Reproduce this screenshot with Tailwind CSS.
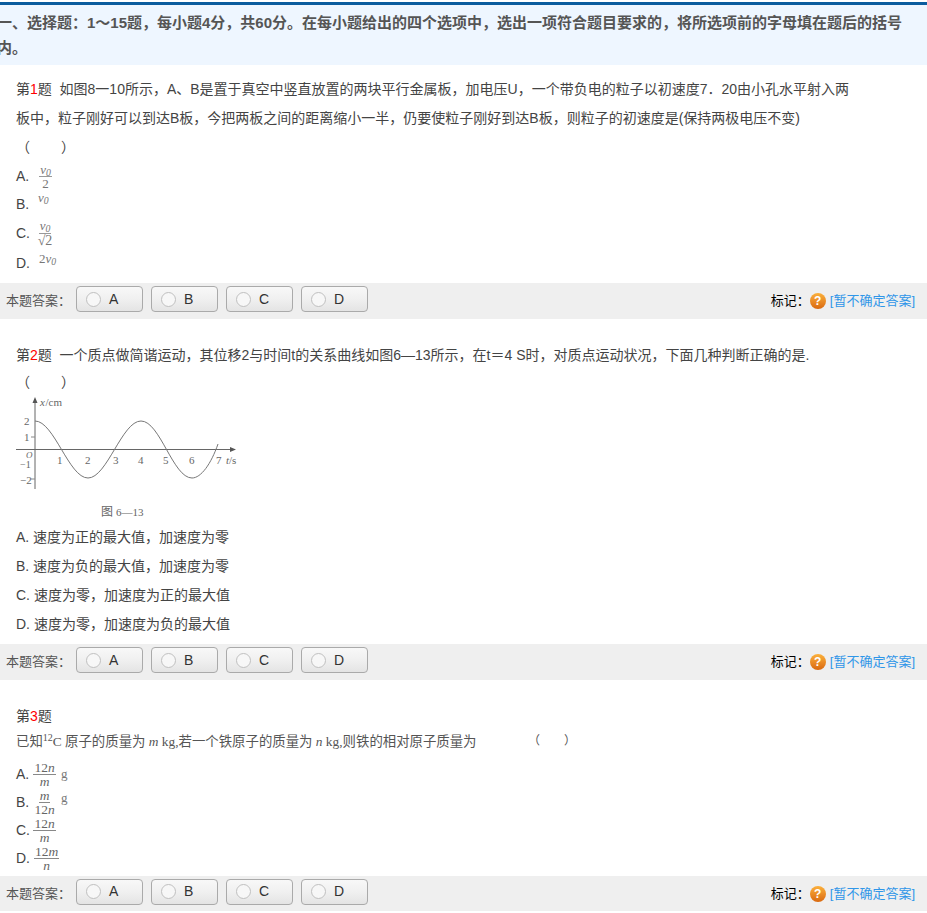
<!DOCTYPE html>
<html lang="zh">
<head>
<meta charset="utf-8">
<script src="https://cdn.jsdelivr.net/npm/@tailwindcss/browser@4"></script>
</head>
<body class="bg-white text-[14px] text-[#444] font-['Liberation_Sans','Noto_Sans_CJK_SC',sans-serif] overflow-x-hidden [text-spacing-trim:space-all]">
<main class="w-[927px] pt-[2px]">
  <header class="border-t-[3px] border-[#0a5c9e] bg-[#eef6ff] h-[63px] pt-[5px] overflow-hidden">
    <p class="-ml-[3px] w-[930px] whitespace-nowrap font-bold text-[15px] leading-[25px] text-[#555]">一、选择题：1～15题，每小题4分，共60分。在每小题给出的四个选项中，选出一项符合题目要求的，将所选项前的字母填在题后的括号<br>内。</p>
  </header>

  <section class="pt-[10px]">
    <div class="pl-[16px]">
      <p class="leading-[29px] whitespace-nowrap">第<span class="text-[#f00]">1</span>题&nbsp; 如图8一10所示，A、B是置于真空中竖直放置的两块平行金属板，加电压U，一个带负电的粒子以初速度7．20由小孔水平射入两<br>板中，粒子刚好可以到达B板，今把两板之间的距离缩小一半，仍要使粒子刚好到达B板，则粒子的初速度是(保持两极电压不变)</p>
      <p class="h-[29px] leading-[29px]">（&nbsp;&nbsp;&nbsp;&nbsp;&nbsp;&nbsp;&nbsp;&nbsp;）</p>
      <div class="flex items-center h-[29px]"><span class="w-[23px]">A.</span><span class="inline-flex flex-col items-center w-[13px] font-['Liberation_Serif',serif] text-[13px] leading-[13px] text-[#777]"><span class="italic border-b border-[#999] px-[1px]">v<sub>0</sub></span><span>2</span></span></div>
      <div class="flex items-center h-[27px]"><span class="w-[22px]">B.</span><span class="mb-[14px] font-['Liberation_Serif',serif] italic text-[13px] leading-[13px] text-[#777]">v<sub>0</sub></span></div>
      <div class="flex items-center h-[31px]"><span class="w-[21px]">C.</span><span class="inline-flex flex-col items-center w-[16px] font-['Liberation_Serif',serif] text-[13px] leading-[14px] text-[#777]"><span class="italic border-b border-[#999] px-[1px]">v<sub>0</sub></span><span class="text-[14px]">√2</span></span></div>
      <div class="flex items-center h-[29px]"><span class="w-[23px]">D.</span><span class="mb-[10px] font-['Liberation_Serif',serif] text-[13px] leading-[13px] text-[#777]">2<i>v<sub>0</sub></i></span></div>
    </div>
    <div class="mt-[5px] flex items-center h-[36px] bg-[#efefef] pl-[6px] pr-[12px]">
      <span class="w-[70px] text-[13px] text-[#555]">本题答案：</span>
      <div class="flex gap-[8px] mb-[4px]">
        <button class="flex items-center w-[67px] h-[26px] border border-[#aaa] rounded-[4px] pl-[9px] gap-[8px] bg-linear-to-b from-[#f8f8f8] via-[#f0f0f0] to-[#e4e4e4] text-[#333]"><span class="w-[15px] h-[15px] rounded-full border border-[#c0c0c0] bg-[#f7f7f7]"></span>A</button>
        <button class="flex items-center w-[67px] h-[26px] border border-[#aaa] rounded-[4px] pl-[9px] gap-[8px] bg-linear-to-b from-[#f8f8f8] via-[#f0f0f0] to-[#e4e4e4] text-[#333]"><span class="w-[15px] h-[15px] rounded-full border border-[#c0c0c0] bg-[#f7f7f7]"></span>B</button>
        <button class="flex items-center w-[67px] h-[26px] border border-[#aaa] rounded-[4px] pl-[9px] gap-[8px] bg-linear-to-b from-[#f8f8f8] via-[#f0f0f0] to-[#e4e4e4] text-[#333]"><span class="w-[15px] h-[15px] rounded-full border border-[#c0c0c0] bg-[#f7f7f7]"></span>C</button>
        <button class="flex items-center w-[67px] h-[26px] border border-[#aaa] rounded-[4px] pl-[9px] gap-[8px] bg-linear-to-b from-[#f8f8f8] via-[#f0f0f0] to-[#e4e4e4] text-[#333]"><span class="w-[15px] h-[15px] rounded-full border border-[#c0c0c0] bg-[#f7f7f7]"></span>D</button>
      </div>
      <div class="ml-auto flex items-center text-[13px]">
        <span class="text-black w-[39px]">标记：</span>
        <span class="w-[16px] h-[16px] rounded-full bg-linear-to-b from-[#fbb03b] to-[#d9690f] text-white font-bold text-[12px] leading-[16px] text-center">?</span>
        <a class="ml-[4px] text-[#2f96e8]">[暂不确定答案]</a>
      </div>
    </div>
  </section>

  <section class="pt-[22px]">
    <div class="pl-[16px]">
      <p class="h-[29px] leading-[29px]">第<span class="text-[#f00]">2</span>题&nbsp; 一个质点做简谐运动，其位移2与时间t的关系曲线如图6—13所示，在t＝4 S时，对质点运动状况，下面几种判断正确的是.</p>
      <p class="h-[24px] leading-[24px]">（&nbsp;&nbsp;&nbsp;&nbsp;&nbsp;&nbsp;&nbsp;&nbsp;）</p>
    </div>
    <svg class="block" width="240" height="129" viewBox="0 0 240 129" fill="none" stroke="#666" stroke-width="1">
      <path d="M16 55.5H234M35 5V95"/>
      <path d="M35 3l-2.5 6h5zM236 55.5l-6-2.5v5z" fill="#555" stroke="none"/>
      <path d="M35 27C54 27 69 84 88 84C107 84 122 27 141 27C160 27 173 84 192 84C201 84 211 70 218 50" stroke="#777"/>
      <path d="M31 43H35M31 85H35" stroke="#888"/>
      <g fill="#666" stroke="none" font-family="Liberation Serif" font-size="11">
        <text x="40" y="12" font-style="italic">x</text><text x="45.5" y="12">/cm</text>
        <text x="24" y="31">2</text><text x="24" y="47">1</text>
        <text x="26" y="64" font-size="9" font-style="italic">O</text>
        <text x="20" y="74" font-size="10">−1</text><text x="20" y="90">−2</text>
        <text x="57" y="70">1</text><text x="85" y="70">2</text><text x="113" y="70">3</text><text x="138" y="70">4</text><text x="163" y="70">5</text><text x="189" y="70">6</text><text x="216" y="70">7</text>
        <text x="226" y="70" font-style="italic">t</text><text x="229" y="70">/s</text>
        <text x="101" y="122" font-size="12" font-family="Noto Sans CJK SC">图</text><text x="116" y="122">6—13</text>
      </g>
    </svg>
    <div class="pl-[16px] [&>p]:h-[29px] [&>p]:leading-[29px]">
      <p>A. 速度为正的最大值，加速度为零</p>
      <p>B. 速度为负的最大值，加速度为零</p>
      <p>C. 速度为零，加速度为正的最大值</p>
      <p>D. 速度为零，加速度为负的最大值</p>
    </div>
    <div class="mt-[5px] flex items-center h-[36px] bg-[#efefef] pl-[6px] pr-[12px]">
      <span class="w-[70px] text-[13px] text-[#555]">本题答案：</span>
      <div class="flex gap-[8px] mb-[4px]">
        <button class="flex items-center w-[67px] h-[26px] border border-[#aaa] rounded-[4px] pl-[9px] gap-[8px] bg-linear-to-b from-[#f8f8f8] via-[#f0f0f0] to-[#e4e4e4] text-[#333]"><span class="w-[15px] h-[15px] rounded-full border border-[#c0c0c0] bg-[#f7f7f7]"></span>A</button>
        <button class="flex items-center w-[67px] h-[26px] border border-[#aaa] rounded-[4px] pl-[9px] gap-[8px] bg-linear-to-b from-[#f8f8f8] via-[#f0f0f0] to-[#e4e4e4] text-[#333]"><span class="w-[15px] h-[15px] rounded-full border border-[#c0c0c0] bg-[#f7f7f7]"></span>B</button>
        <button class="flex items-center w-[67px] h-[26px] border border-[#aaa] rounded-[4px] pl-[9px] gap-[8px] bg-linear-to-b from-[#f8f8f8] via-[#f0f0f0] to-[#e4e4e4] text-[#333]"><span class="w-[15px] h-[15px] rounded-full border border-[#c0c0c0] bg-[#f7f7f7]"></span>C</button>
        <button class="flex items-center w-[67px] h-[26px] border border-[#aaa] rounded-[4px] pl-[9px] gap-[8px] bg-linear-to-b from-[#f8f8f8] via-[#f0f0f0] to-[#e4e4e4] text-[#333]"><span class="w-[15px] h-[15px] rounded-full border border-[#c0c0c0] bg-[#f7f7f7]"></span>D</button>
      </div>
      <div class="ml-auto flex items-center text-[13px]">
        <span class="text-black w-[39px]">标记：</span>
        <span class="w-[16px] h-[16px] rounded-full bg-linear-to-b from-[#fbb03b] to-[#d9690f] text-white font-bold text-[12px] leading-[16px] text-center">?</span>
        <a class="ml-[4px] text-[#2f96e8]">[暂不确定答案]</a>
      </div>
    </div>
  </section>

  <section class="pt-[22px]">
    <div class="pl-[16px]">
      <p class="h-[29px] leading-[29px]">第<span class="text-[#f00]">3</span>题</p>
      <p class="flex h-[25px] leading-[21px] text-[13.4px] text-[#555] font-['Liberation_Serif','Noto_Sans_CJK_SC',serif]">
        <span class="w-[512px] whitespace-nowrap">已知<sup>12</sup>C 原子的质量为 <i>m</i> kg,若一个铁原子的质量为 <i>n</i> kg,则铁的相对原子质量为</span><span class="text-[12px]">（&nbsp;&nbsp;&nbsp;&nbsp;&nbsp;&nbsp;&nbsp;&nbsp;）</span>
      </p>
      <div class="mt-[4px] flex items-center h-[28px]"><span class="w-[18px]">A.</span><span class="inline-flex flex-col items-center w-[21px] font-['Liberation_Serif',serif] text-[13.5px] leading-[13px] text-[#666]"><span class="border-b border-[#888] px-[1px]">12<i>n</i></span><i>m</i></span><span class="ml-[6px] font-['Liberation_Serif',serif] text-[13px] text-[#777]">g</span></div>
      <div class="flex items-center h-[28px]"><span class="w-[18px]">B.</span><span class="inline-flex flex-col items-center w-[21px] font-['Liberation_Serif',serif] text-[13.5px] leading-[13px] text-[#666]"><i class="border-b border-[#888] px-[1px]">m</i><span>12<i>n</i></span></span><span class="ml-[6px] mb-[8px] font-['Liberation_Serif',serif] text-[13px] text-[#777]">g</span></div>
      <div class="flex items-center h-[28px]"><span class="w-[18px]">C.</span><span class="inline-flex flex-col items-center w-[21px] font-['Liberation_Serif',serif] text-[13.5px] leading-[13px] text-[#666]"><span class="border-b border-[#888] px-[1px]">12<i>n</i></span><i>m</i></span></div>
      <div class="flex items-center h-[28px]"><span class="w-[18px]">D.</span><span class="inline-flex flex-col items-center w-[25px] font-['Liberation_Serif',serif] text-[13.5px] leading-[13px] text-[#666]"><span class="border-b border-[#888] px-[1px]">12<i>m</i></span><i>n</i></span></div>
    </div>
    <div class="mt-[4px] flex items-center h-[35px] bg-[#efefef] pl-[6px] pr-[12px]">
      <span class="w-[70px] text-[13px] text-[#555]">本题答案：</span>
      <div class="flex gap-[8px] mb-[4px]">
        <button class="flex items-center w-[67px] h-[26px] border border-[#aaa] rounded-[4px] pl-[9px] gap-[8px] bg-linear-to-b from-[#f8f8f8] via-[#f0f0f0] to-[#e4e4e4] text-[#333]"><span class="w-[15px] h-[15px] rounded-full border border-[#c0c0c0] bg-[#f7f7f7]"></span>A</button>
        <button class="flex items-center w-[67px] h-[26px] border border-[#aaa] rounded-[4px] pl-[9px] gap-[8px] bg-linear-to-b from-[#f8f8f8] via-[#f0f0f0] to-[#e4e4e4] text-[#333]"><span class="w-[15px] h-[15px] rounded-full border border-[#c0c0c0] bg-[#f7f7f7]"></span>B</button>
        <button class="flex items-center w-[67px] h-[26px] border border-[#aaa] rounded-[4px] pl-[9px] gap-[8px] bg-linear-to-b from-[#f8f8f8] via-[#f0f0f0] to-[#e4e4e4] text-[#333]"><span class="w-[15px] h-[15px] rounded-full border border-[#c0c0c0] bg-[#f7f7f7]"></span>C</button>
        <button class="flex items-center w-[67px] h-[26px] border border-[#aaa] rounded-[4px] pl-[9px] gap-[8px] bg-linear-to-b from-[#f8f8f8] via-[#f0f0f0] to-[#e4e4e4] text-[#333]"><span class="w-[15px] h-[15px] rounded-full border border-[#c0c0c0] bg-[#f7f7f7]"></span>D</button>
      </div>
      <div class="ml-auto flex items-center text-[13px]">
        <span class="text-black w-[39px]">标记：</span>
        <span class="w-[16px] h-[16px] rounded-full bg-linear-to-b from-[#fbb03b] to-[#d9690f] text-white font-bold text-[12px] leading-[16px] text-center">?</span>
        <a class="ml-[4px] text-[#2f96e8]">[暂不确定答案]</a>
      </div>
    </div>
  </section>
</main>
</body>
</html>
